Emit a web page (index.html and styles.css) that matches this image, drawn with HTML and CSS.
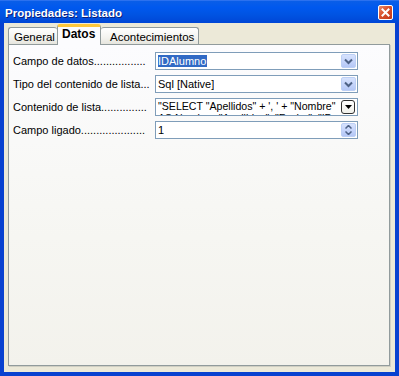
FILE: index.html
```html
<!DOCTYPE html>
<html>
<head>
<meta charset="utf-8">
<link rel="stylesheet" href="styles.css">
</head>
<body>
<div class="window">
  <div class="titlebar">
    <span class="title">Propiedades: Listado</span>
    <span class="close"><svg width="13" height="13" viewBox="0 0 13 13"><path d="M3.5 3.5 L9.5 9.5 M9.5 3.5 L3.5 9.5" stroke="#fff" stroke-width="2" stroke-linecap="square"/></svg></span>
  </div>
  <div class="client">
    <div class="tabs">
      <div class="tab first">General</div>
      <div class="tab active">Datos</div>
      <div class="tab">Acontecimientos</div>
    </div>
    <div class="panel">
      <div class="row">
        <div class="label">Campo de datos.................</div>
        <div class="field">
          <span class="value"><span class="sel">IDAlumno</span></span>
          <span class="xpbtn"><svg width="9" height="7" viewBox="0 0 9 7"><path d="M1 1.5 L4.5 5 L8 1.5" fill="none" stroke="#4d6185" stroke-width="2"/></svg></span>
        </div>
      </div>
      <div class="row">
        <div class="label">Tipo del contenido de lista...</div>
        <div class="field">
          <span class="value">Sql [Native]</span>
          <span class="xpbtn"><svg width="9" height="7" viewBox="0 0 9 7"><path d="M1 1.5 L4.5 5 L8 1.5" fill="none" stroke="#4d6185" stroke-width="2"/></svg></span>
        </div>
      </div>
      <div class="row">
        <div class="label">Contenido de lista...............</div>
        <div class="field">
          <span class="value twoline">"SELECT "Apellidos" + ', ' + "Nombre"<br>AS Nombre, "Apellidos", "Fecha", "ID</span>
          <span class="classicbtn"><svg width="7" height="4" viewBox="0 0 7 4"><path d="M0 0 H7 L3.5 4 Z" fill="#000"/></svg></span>
        </div>
      </div>
      <div class="row">
        <div class="label">Campo ligado.....................</div>
        <div class="field">
          <span class="value">1</span>
          <span class="spin">
            <svg width="7" height="4" viewBox="0 0 7 4"><path d="M0.5 3.5 L3.5 0.5 L6.5 3.5" fill="none" stroke="#4d6185" stroke-width="1.5"/></svg>
            <svg width="7" height="4" viewBox="0 0 7 4"><path d="M0.5 0.5 L3.5 3.5 L6.5 0.5" fill="none" stroke="#4d6185" stroke-width="1.5"/></svg>
          </span>
        </div>
      </div>
    </div>
  </div>
</div>
</body>
</html>
```
FILE: styles.css
```css
html, body {
  margin: 0;
  padding: 0;
  background: #fff;
}
.window {
  width: 399px;
  height: 376px;
  box-sizing: border-box;
  background: #0841d0;
  display: flex;
  flex-direction: column;
  font-family: "Liberation Sans", Arial, sans-serif;
  font-size: 11px;
  color: #000;
}
.titlebar {
  height: 22px;
  flex: none;
  display: flex;
  align-items: center;
  justify-content: space-between;
  padding: 0 6px 0 5px;
  background: linear-gradient(to bottom, #0a5ee8 0%, #0058ee 30%, #0054e3 60%, #0046d6 100%);
  border-top: 1px solid #2b71ef;
}
.title {
  color: #fff;
  font-weight: bold;
  font-size: 11.5px;
  text-shadow: 1px 1px 0 #0a1e7a;
  margin-top: 1px;
}
.close {
  width: 13px;
  height: 13px;
  border: 1px solid #fff;
  border-radius: 2px;
  background: linear-gradient(135deg, #e88c6e 0%, #d9502b 45%, #c1381b 100%);
  display: flex;
  align-items: center;
  justify-content: center;
  margin-top: 1px;
}
.close svg { display: block; }
.client {
  flex: 1;
  margin: 0 4px 4px 4px;
  background: #ece9d8;
  padding: 2px 5px 6px 4px;
  display: flex;
  flex-direction: column;
}
.tabs {
  display: flex;
  align-items: flex-end;
  height: 19px;
  position: relative;
  z-index: 1;
}
.tab {
  height: 17px;
  box-sizing: border-box;
  border: 1px solid #919b9c;
  border-bottom: none;
  border-radius: 3px 3px 0 0;
  background: linear-gradient(to bottom, #ffffff 0%, #f3f3ef 60%, #e6e5dd 100%);
  padding: 2px 6px 0 6px;
  color: #000;
  font-size: 11.5px;
  line-height: 14px;
}
.tab.first {
  padding: 2px 6px 0 5px;
  border-right: none;
  width: 49px;
}
.tab.active {
  height: 21px;
  background: #fcfcfe;
  border-top: 3px solid #ffc83c;
  font-weight: bold;
  font-size: 12px;
  padding: 0 5px 0 4px;
  line-height: 15px;
  margin-bottom: -1px;
  border-left: 1px solid #919b9c;
  border-right: 1px solid #919b9c;
  width: 44px;
}
.tab.active + .tab {
  border-left: none;
  padding-left: 9px;
  padding-right: 10px;
  width: 98px;
}
.panel {
  flex: 1;
  border: 1px solid #919b9c;
  box-shadow: 1px 1px 0 #d0cfc3;
  background: linear-gradient(to bottom, #fcfcfe 0%, #f6f6f2 60%, #f3f2ec 100%);
  padding: 7px 0 0 4px;
  display: flex;
  flex-direction: column;
  gap: 5px;
}
.row {
  display: flex;
  align-items: center;
  height: 18px;
}
.label {
  width: 138px;
  margin-right: 4px;
  white-space: nowrap;
  font-size: 11px;
}
.field {
  width: 203px;
  height: 18px;
  box-sizing: border-box;
  border: 1px solid #7f9db9;
  background: #fff;
  display: flex;
  align-items: center;
  justify-content: space-between;
  padding: 1px;
  overflow: hidden;
}
.value {
  padding-left: 1px;
  font-size: 11px;
  white-space: nowrap;
  overflow: hidden;
}
.sel {
  background: #316ac5;
  color: #fff;
  padding-right: 1px;
}
.twoline {
  font-size: 10.6px;
  line-height: 12px;
  align-self: flex-start;
  height: 15px;
  width: 182px;
}
.xpbtn {
  width: 15px;
  height: 14px;
  flex: none;
  box-sizing: border-box;
  border: 1px solid #bccff5;
  border-radius: 2px;
  background: linear-gradient(to bottom, #d6e2fd 0%, #c6d5fb 50%, #b4c7f6 100%);
  display: flex;
  align-items: center;
  justify-content: center;
}
.xpbtn svg { display: block; }
.classicbtn {
  width: 14px;
  height: 14px;
  flex: none;
  box-sizing: border-box;
  border: 1px solid #303030;
  border-radius: 3px;
  background: linear-gradient(to bottom, #ffffff 0%, #f0f0ea 100%);
  display: flex;
  align-items: center;
  justify-content: center;
  margin-right: 1px;
}
.classicbtn svg { display: block; }
.spin {
  width: 15px;
  height: 14px;
  flex: none;
  box-sizing: border-box;
  border: 1px solid #bccff5;
  border-radius: 2px;
  background: linear-gradient(to bottom, #d6e2fd 0%, #c6d5fb 50%, #b4c7f6 100%);
  display: flex;
  flex-direction: column;
  align-items: center;
  justify-content: center;
  gap: 2px;
}
.spin svg { display: block; }
```
